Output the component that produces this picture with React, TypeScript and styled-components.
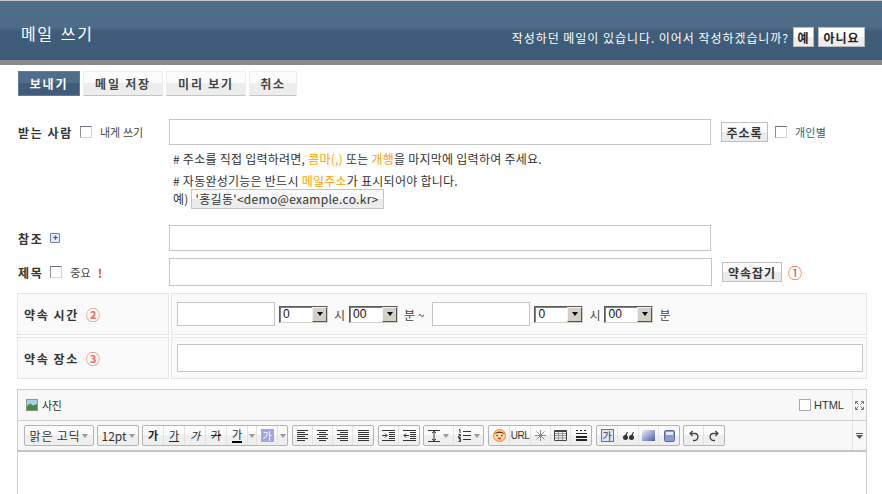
import * as React from 'react';
import styled, { createGlobalStyle } from 'styled-components';

const GlobalStyle = createGlobalStyle`
  html, body {
    margin: 0;
    padding: 0;
    background: #fff;
  }
  * {
    box-sizing: border-box;
  }
`;

const Page = styled.div`
  width: 882px;
  height: 494px;
  overflow: hidden;
  background: #fff;
  color: #333;
  font-family: "Noto Sans CJK KR", "Liberation Sans", sans-serif;
  font-size: 12px;
`;

const Header = styled.header`
  height: 65px;
  display: flex;
  align-items: center;
  justify-content: space-between;
  padding: 4px 17px 0 21px;
  border-top: 1px solid #c8c8c8;
  border-bottom: 5px solid #8a8a8a;
  background: linear-gradient(#506e8a 0, #4e6c88 26px, #3f5c78 31px, #3e5b77 100%);
`;

const PageTitle = styled.h1`
  margin: 0;
  font-size: 16px;
  font-weight: 400;
  letter-spacing: 1.6px;
  word-spacing: 2px;
  color: #fff;
`;

const DraftNotice = styled.div`
  display: flex;
  align-items: center;
  gap: 4px;
  margin-top: 9px;
  color: #fff;
  font-size: 12px;
  letter-spacing: 0.95px;
`;

const DraftButton = styled.button<{ $w: number }>`
  width: ${(p) => p.$w}px;
  height: 20px;
  padding: 0;
  border: 1px solid #b8bcc0;
  background: linear-gradient(#fff 50%, #ececec 50%);
  color: #222;
  font: 700 12px "Noto Sans CJK KR", sans-serif;
  letter-spacing: 1px;
`;

const Tabs = styled.nav`
  display: flex;
  gap: 3px;
  margin: 6px 0 0 18px;
`;

const Tab = styled.button<{ $primary?: boolean; $w: number }>`
  width: ${(p) => p.$w}px;
  height: 25px;
  padding: 0;
  border: 1px solid ${(p) => (p.$primary ? '#5d7d9c' : '#eee')};
  border-bottom: 1px solid ${(p) => (p.$primary ? '#5d7d9c' : '#c4c4c4')};
  background: ${(p) =>
    p.$primary
      ? 'linear-gradient(#4f6e8c 50%, #3f5c7a 50%)'
      : 'linear-gradient(#fcfcfc 50%, #ededed 50%)'};
  color: ${(p) => (p.$primary ? '#fff' : '#444')};
  font: 700 12px "Noto Sans CJK KR", sans-serif;
  letter-spacing: 1.8px;
`;

const Form = styled.form`
  margin: 23px 0 0 18px;
  width: 850px;
`;

const Row = styled.div<{ $top?: number; $h: number }>`
  display: flex;
  align-items: center;
  height: ${(p) => p.$h}px;
  margin-top: ${(p) => p.$top ?? 0}px;
`;

const LabelCol = styled.div`
  width: 151px;
  flex: none;
  display: flex;
  align-items: center;
`;

const Label = styled.label`
  font-weight: 700;
  font-size: 12px;
  letter-spacing: 1.6px;
  color: #333;
`;

const CheckBox = styled.span`
  display: inline-block;
  flex: none;
  width: 12px;
  height: 12px;
  margin: 0 8px 0 7px;
  background: #fff;
  border: 1px solid;
  border-color: #6b6f86 #d8d4cc #d8d4cc #8a8e9a;
`;

const SmallText = styled.span`
  font-size: 11px;
  letter-spacing: 0.1px;
  color: #444;
`;

const TextInput = styled.input<{ $w: number; $h: number }>`
  display: block;
  flex: none;
  width: ${(p) => p.$w}px;
  height: ${(p) => p.$h}px;
  padding: 0;
  background: #fff;
  border: 1px solid #c6c6c6;
  outline: none;
`;

const RangeEnd = styled(TextInput)`
  margin-left: 8px;
`;

const GrayButton = styled.button<{ $w: number }>`
  flex: none;
  width: ${(p) => p.$w}px;
  height: 20px;
  margin-left: 10px;
  padding: 0;
  border: 1px solid #c0c0c0;
  background: linear-gradient(#fdfdfd 50%, #ebebeb 50%);
  color: #333;
  font: 700 12px "Noto Sans CJK KR", sans-serif;
  letter-spacing: 1px;
`;

const AddressLink = styled.a`
  font-size: 11px;
  color: #36597e;
  letter-spacing: 0.2px;
`;

const Hint = styled.p<{ $top: number }>`
  margin: ${(p) => p.$top}px 0 0 155px;
  height: 18px;
  line-height: 18px;
  font-size: 12px;
  letter-spacing: 0.25px;
  color: #333;
  display: flex;
  align-items: center;
  white-space: pre;
`;

const Accent = styled.span`
  color: #ffa200;
`;

const ExampleChip = styled.span`
  display: inline-block;
  height: 20px;
  line-height: 18px;
  margin-left: 2px;
  padding: 0 4px;
  border: 1px solid #c6c6c6;
  background: linear-gradient(#fafafa 50%, #ececec 50%);
  letter-spacing: 0.3px;
`;

const PlusBox = styled.span`
  display: inline-flex;
  align-items: center;
  justify-content: center;
  width: 10px;
  height: 10px;
  margin-left: 7px;
  border: 1px solid #6c80b8;
  border-radius: 1px;
  background: #e4eaf6;
  color: #3a4f90;
  font: 700 9px/1 "Liberation Sans", sans-serif;
`;

const Important = styled.span`
  margin-left: 7px;
  color: #f03c10;
  font-weight: 700;
  font-size: 12px;
`;

const Circled = styled.span<{ $soft?: boolean }>`
  margin-left: ${(p) => (p.$soft ? 7 : 6)}px;
  font-size: 14px;
  line-height: 1;
  color: ${(p) => (p.$soft ? '#f0706a' : '#e83a30')};
`;

const ScheduleTable = styled.div`
  display: grid;
  grid-template-columns: 152px 696px;
  grid-auto-rows: 42px;
  gap: 2px;
  margin: 7px 0 0 -1px;
`;

const HeadCell = styled.div`
  display: flex;
  align-items: center;
  padding-left: 6px;
  background: #fafafa;
  border: 1px solid #e6e6e6;
  font-weight: 700;
  letter-spacing: 1.6px;
  color: #333;
`;

const BodyCell = styled.div`
  display: flex;
  align-items: center;
  padding-left: 5px;
  background: #fafafa;
  border: 1px solid #e6e6e6;
`;

const SelectBox = styled.span<{ $w: number }>`
  display: flex;
  align-items: center;
  justify-content: space-between;
  flex: none;
  width: ${(p) => p.$w}px;
  height: 17px;
  margin-left: 4px;
  padding-left: 3px;
  background: #fff;
  border: 1px solid;
  border-color: #5a5a5a #d4d0c8 #d4d0c8 #5a5a5a;
  box-shadow: inset 1px 1px 0 #808080;
  font: 12px "Liberation Sans", sans-serif;
  color: #111;
`;

const SelectArrow = styled.span`
  width: 15px;
  height: 15px;
  display: flex;
  align-items: center;
  justify-content: center;
  background: #d4d0c8;
  border: 1px solid;
  border-color: #f4f2ec #555 #555 #f4f2ec;
  &::after {
    content: '';
    border: 3px solid transparent;
    border-top: 4px solid #000;
    margin-top: 3px;
  }
`;

const Unit = styled.span`
  margin-left: 6px;
  color: #444;
  font-size: 12px;
`;

const Editor = styled.section`
  margin: 10px 0 0 -1px;
  width: 850px;
  height: 110px;
  border: 1px solid #cfcfcf;
  border-bottom: 0;
`;

const EditorTop = styled.div`
  display: flex;
  align-items: center;
  height: 31px;
  background: #f8f8f8;
  border-bottom: 1px solid #cfcfcf;
`;

const PhotoButton = styled.span`
  display: flex;
  align-items: center;
  gap: 4px;
  margin-left: 8px;
  font-size: 11px;
  color: #333;
  letter-spacing: -0.3px;
`;

const HtmlToggle = styled.span`
  display: flex;
  align-items: center;
  gap: 3px;
  margin-left: auto;
  margin-right: 8px;
  font: 11px "Liberation Sans", sans-serif;
  color: #333;
`;

const HtmlBox = styled.span`
  width: 12px;
  height: 12px;
  background: #fff;
  border: 1px solid #aaa;
`;

const SideSlot = styled.span<{ $push?: boolean }>`
  flex: none;
  width: 14px;
  margin-left: ${(p) => (p.$push ? 'auto' : '0')};
  align-self: stretch;
  display: flex;
  align-items: center;
  justify-content: center;
  border-left: 1px solid #e4e4e4;
`;

const ToolRow = styled.div`
  display: flex;
  align-items: center;
  height: 31px;
  padding-left: 6px;
  background: #f8f8f8;
  border-bottom: 2px solid #c4c4c4;
`;

const ToolGroup = styled.div<{ $gap?: number }>`
  display: flex;
  flex: none;
  height: 21px;
  margin-right: ${(p) => p.$gap ?? 4}px;
  background: linear-gradient(#fbfbfb 50%, #efefef 50%);
  border: 1px solid #b4b4b4;
  border-radius: 2px;
  overflow: hidden;
`;

const ToolButton = styled.span<{ $w?: number }>`
  display: flex;
  flex: none;
  align-items: center;
  justify-content: center;
  gap: 3px;
  width: ${(p) => p.$w ?? 20}px;
  border-right: 1px solid #e2e2e2;
  font-size: 11px;
  color: #222;
  &:last-child {
    border-right: 0;
  }
`;

const Combo = styled(ToolGroup)<{ $w: number }>`
  width: ${(p) => p.$w}px;
  align-items: center;
  justify-content: center;
  gap: 2px;
  font-size: 12px;
  color: #333;
`;

const FontName = styled.span`
  letter-spacing: 0.8px;
`;

const UrlText = styled.span`
  font: 10px "Liberation Sans", sans-serif;
  letter-spacing: -0.5px;
  color: #333;
`;

const Caret = styled.span`
  flex: none;
  border: 3px solid transparent;
  border-top: 4px solid #999;
  margin-top: 3px;
`;

const Glyph = styled.span<{ $bold?: boolean; $italic?: boolean; $under?: boolean; $strike?: boolean }>`
  font-weight: ${(p) => (p.$bold ? 700 : 400)};
  font-style: ${(p) => (p.$italic ? 'italic' : 'normal')};
  text-decoration: ${(p) => (p.$under ? 'underline' : p.$strike ? 'line-through' : 'none')};
  line-height: 1;
`;

const ColorGlyph = styled.span`
  display: inline-block;
  line-height: 11px;
  height: 14px;
  border-bottom: 2px solid #000;
`;

const HighlightGlyph = styled.span<{ $outlined?: boolean }>`
  display: inline-block;
  width: 13px;
  height: 13px;
  text-align: center;
  font-size: 10px;
  background: ${(p) => (p.$outlined ? '#dfe4f8' : '#9ea6e6')};
  color: ${(p) => (p.$outlined ? '#334' : '#fff')};
  border: ${(p) => (p.$outlined ? '1px solid #5a70c0' : '0')};
  line-height: ${(p) => (p.$outlined ? 11 : 13)}px;
`;

const lineSets: Record<string, [number, number][]> = {
  left: [[1, 12], [1, 9], [1, 12], [1, 9], [1, 12], [1, 9]],
  center: [[1, 12], [3, 10], [1, 12], [3, 10], [1, 12], [3, 10]],
  right: [[1, 12], [4, 12], [1, 12], [4, 12], [1, 12], [4, 12]],
  justify: [[1, 12], [1, 12], [1, 12], [1, 12], [1, 12], [1, 12]],
};

const AlignIcon = ({ kind }: { kind: string }) => (
  <svg width="13" height="11" viewBox="0 0 13 11">
    {lineSets[kind].map(([a, b], i) => (
      <path key={i} d={`M${a} ${i * 2 + 0.5}H${b}`} stroke="#333" fill="none" />
    ))}
  </svg>
);

const IndentIcon = ({ out }: { out?: boolean }) => (
  <svg width="13" height="11" viewBox="0 0 13 11" fill="none" stroke="#333">
    <path d="M0 .5H13M0 10.5H13M7 2.5H13M7 4.5H13M7 6.5H13M7 8.5H13" />
    {out ? <path d="M6 5.5H1M3 3.5L1 5.5L3 7.5" /> : <path d="M0 5.5H5M3 3.5L5 5.5L3 7.5" />}
  </svg>
);

const LineHeightIcon = () => (
  <svg width="12" height="12" viewBox="0 0 12 12" fill="none" stroke="#333">
    <path d="M0 .5H12M0 11.5H12M6 1V11M4 3L6 1.5L8 3M4 9L6 10.5L8 9" />
  </svg>
);

const ListIcon = () => (
  <svg width="13" height="13" viewBox="0 0 13 13" fill="none" stroke="#333">
    <path d="M5 2.5H13M5 6.5H13M5 10.5H13M1 .5H2V4M.5 5.5H2.5V7H.5V8.5H2.5M.5 9.5H2.5V12.5H.5M1 11H2.5" />
  </svg>
);

const EmojiIcon = () => (
  <svg width="13" height="13" viewBox="0 0 13 13">
    <circle cx="6.5" cy="6.5" r="6" fill="#fbd9a8" stroke="#e88a20" />
    <path d="M1.5 5C2.5 1.5 10.5 1.5 11.5 5C9 3.5 4 3.5 1.5 5Z" fill="#7a3a18" />
    <circle cx="4" cy="6.5" r=".8" fill="#333" />
    <circle cx="9" cy="6.5" r=".8" fill="#333" />
    <path d="M4.5 8.5H8.5C8.5 11 4.5 11 4.5 8.5Z" fill="#e83a30" />
  </svg>
);

const StarIcon = () => (
  <svg width="11" height="11" viewBox="0 0 11 11" fill="none" stroke="#8a8a8a">
    <path d="M5.5 0V11M0 5.5H11M1.5 1.5L9.5 9.5M9.5 1.5L1.5 9.5" />
  </svg>
);

const TableIcon = () => (
  <svg width="13" height="11" viewBox="0 0 13 11" fill="none" stroke="#444">
    <path d="M.5 3.5H12.5M.5 5.5H12.5M.5 8H12.5M4.5 1V10M8.5 1V10" stroke="#999" />
    <path d="M.5 .5H12.5V10.5H.5Z" />
    <path d="M.5 1.5H12.5" />
  </svg>
);

const RuleIcon = () => (
  <svg width="11" height="11" viewBox="0 0 11 11" fill="none" stroke="#222">
    <path d="M0 .5H2M4 .5H6M8 .5H10" />
    <path d="M0 3.5H11" />
    <path d="M0 7H11" strokeWidth="2" />
    <path d="M0 10H11" strokeWidth="2" />
  </svg>
);

const QuoteIcon = () => (
  <svg width="11" height="8" viewBox="0 0 11 8" fill="#333">
    <circle cx="2.5" cy="5.5" r="2.5" />
    <circle cx="8.5" cy="5.5" r="2.5" />
    <path d="M1 5L4 0H5L3 5ZM7 5L10 0H11L9 5Z" />
  </svg>
);

const BoxIcon = () => (
  <svg width="13" height="11" viewBox="0 0 13 11">
    <defs>
      <linearGradient id="boxFill" x1="0" y1="0" x2="1" y2="1">
        <stop offset="0" stopColor="#eef0fa" />
        <stop offset="1" stopColor="#4a5aa8" />
      </linearGradient>
    </defs>
    <rect width="13" height="11" fill="url(#boxFill)" />
  </svg>
);

const LayerIcon = () => (
  <svg width="11" height="12" viewBox="0 0 11 12">
    <rect x=".5" y=".5" width="10" height="11" rx="1.5" fill="#8a9ccc" stroke="#5a6ca8" />
    <rect x="2" y="2" width="7" height="3" fill="#e6eaf8" />
  </svg>
);

const UndoIcon = ({ redo }: { redo?: boolean }) => (
  <svg width="10" height="12" viewBox="0 0 10 12" fill="none" stroke="#444" strokeWidth="1.4">
    <g transform={redo ? 'matrix(-1 0 0 1 10 0)' : undefined}>
      <path d="M2 3.5H6C10 3.5 10 10.5 5 10.5H4" />
      <path d="M3.5 1L1.2 3.5L3.5 6" />
    </g>
  </svg>
);

const PhotoIcon = () => (
  <svg width="12" height="12" viewBox="0 0 12 12">
    <rect x=".5" y=".5" width="11" height="11" fill="#a8d0e8" stroke="#8a9a90" />
    <path d="M1 10V7L4 4.5L7 6.5L11 5V11H1Z" fill="#4a8a40" />
  </svg>
);

const ExpandIcon = () => (
  <svg width="9" height="9" viewBox="0 0 9 9" fill="none" stroke="#777">
    <path d="M.5 3V.5H3M6 .5H8.5V3M8.5 6V8.5H6M3 8.5H.5V6M1 1L3.5 3.5M8 1L5.5 3.5M8 8L5.5 5.5M1 8L3.5 5.5" />
  </svg>
);

const CollapseIcon = () => (
  <svg width="7" height="6" viewBox="0 0 7 6" fill="#555">
    <path d="M0 0H7V1H0ZM0 2H7L3.5 6Z" />
  </svg>
);

export default function App() {
  return (
    <Page>
      <GlobalStyle />
      <Header>
        <PageTitle>메일 쓰기</PageTitle>
        <DraftNotice>
          작성하던 메일이 있습니다. 이어서 작성하겠습니까?
          <DraftButton type="button" $w={21}>예</DraftButton>
          <DraftButton type="button" $w={47}>아니요</DraftButton>
        </DraftNotice>
      </Header>

      <Tabs>
        <Tab type="button" $primary $w={62}>보내기</Tab>
        <Tab type="button" $w={80}>메일 저장</Tab>
        <Tab type="button" $w={80}>미리 보기</Tab>
        <Tab type="button" $w={48}>취소</Tab>
      </Tabs>

      <Form>
        <Row $h={26}>
          <LabelCol>
            <Label>받는 사람</Label>
            <CheckBox />
            <SmallText>내게 쓰기</SmallText>
          </LabelCol>
          <TextInput $w={542} $h={26} />
          <GrayButton type="button" $w={47}>주소록</GrayButton>
          <CheckBox />
          <AddressLink>개인별</AddressLink>
        </Row>
        <Hint $top={5}>
          # 주소를 직접 입력하려면, <Accent>콤마(,)</Accent> 또는 <Accent>개행</Accent>을 마지막에 입력하여 주세요.
        </Hint>
        <Hint $top={4}>
          # 자동완성기능은 반드시 <Accent>메일주소</Accent>가 표시되어야 합니다.
        </Hint>
        <Hint $top={0}>
          예)<ExampleChip>'홍길동'&lt;demo@example.co.kr&gt;</ExampleChip>
        </Hint>

        <Row $top={17} $h={26}>
          <LabelCol>
            <Label>참조</Label>
            <PlusBox>+</PlusBox>
          </LabelCol>
          <TextInput $w={542} $h={26} />
        </Row>
        <Row $top={7} $h={28}>
          <LabelCol>
            <Label>제목</Label>
            <CheckBox />
            <SmallText>중요</SmallText>
            <Important>!</Important>
          </LabelCol>
          <TextInput $w={543} $h={28} />
          <GrayButton type="button" $w={60}>약속잡기</GrayButton>
          <Circled>①</Circled>
        </Row>

        <ScheduleTable>
          <HeadCell>
            약속 시간<Circled $soft>②</Circled>
          </HeadCell>
          <BodyCell>
            <TextInput $w={98} $h={24} />
            <SelectBox $w={49}>0<SelectArrow /></SelectBox>
            <Unit>시</Unit>
            <SelectBox $w={49}>00<SelectArrow /></SelectBox>
            <Unit>분 ~</Unit>
            <RangeEnd $w={98} $h={24} />
            <SelectBox $w={49}>0<SelectArrow /></SelectBox>
            <Unit>시</Unit>
            <SelectBox $w={49}>00<SelectArrow /></SelectBox>
            <Unit>분</Unit>
          </BodyCell>
          <HeadCell>
            약속 장소<Circled $soft>③</Circled>
          </HeadCell>
          <BodyCell>
            <TextInput $w={686} $h={28} />
          </BodyCell>
        </ScheduleTable>

        <Editor>
          <EditorTop>
            <PhotoButton>
              <PhotoIcon />
              사진
            </PhotoButton>
            <HtmlToggle>
              <HtmlBox />
              HTML
            </HtmlToggle>
            <SideSlot><ExpandIcon /></SideSlot>
          </EditorTop>
          <ToolRow>
            <Combo $w={70} $gap={3}><FontName>맑은 고딕</FontName><Caret /></Combo>
            <Combo $w={42} $gap={3}>12pt<Caret /></Combo>
            <ToolGroup>
              <ToolButton $w={21}><Glyph $bold>가</Glyph></ToolButton>
              <ToolButton $w={21}><Glyph $under>가</Glyph></ToolButton>
              <ToolButton $w={21}><Glyph $italic>가</Glyph></ToolButton>
              <ToolButton $w={21}><Glyph $strike>가</Glyph></ToolButton>
              <ToolButton $w={21}><ColorGlyph>가</ColorGlyph></ToolButton>
              <ToolButton $w={9}><Caret /></ToolButton>
              <ToolButton $w={21}><HighlightGlyph>가</HighlightGlyph></ToolButton>
              <ToolButton $w={9}><Caret /></ToolButton>
            </ToolGroup>
            <ToolGroup>
              <ToolButton><AlignIcon kind="left" /></ToolButton>
              <ToolButton><AlignIcon kind="center" /></ToolButton>
              <ToolButton><AlignIcon kind="right" /></ToolButton>
              <ToolButton><AlignIcon kind="justify" /></ToolButton>
            </ToolGroup>
            <ToolGroup $gap={3}>
              <ToolButton><IndentIcon /></ToolButton>
              <ToolButton><IndentIcon out /></ToolButton>
            </ToolGroup>
            <ToolGroup>
              <ToolButton $w={30}><LineHeightIcon /><Caret /></ToolButton>
              <ToolButton $w={29}><ListIcon /><Caret /></ToolButton>
            </ToolGroup>
            <ToolGroup>
              <ToolButton $w={21}><EmojiIcon /></ToolButton>
              <ToolButton $w={21}><UrlText>URL</UrlText></ToolButton>
              <ToolButton><StarIcon /></ToolButton>
              <ToolButton><TableIcon /></ToolButton>
              <ToolButton><RuleIcon /></ToolButton>
            </ToolGroup>
            <ToolGroup $gap={3}>
              <ToolButton $w={21}><HighlightGlyph $outlined>가</HighlightGlyph></ToolButton>
              <ToolButton $w={21}><QuoteIcon /></ToolButton>
              <ToolButton><BoxIcon /></ToolButton>
              <ToolButton><LayerIcon /></ToolButton>
            </ToolGroup>
            <ToolGroup $gap={0}>
              <ToolButton><UndoIcon /></ToolButton>
              <ToolButton><UndoIcon redo /></ToolButton>
            </ToolGroup>
            <SideSlot $push><CollapseIcon /></SideSlot>
          </ToolRow>
        </Editor>
      </Form>
    </Page>
  );
}
